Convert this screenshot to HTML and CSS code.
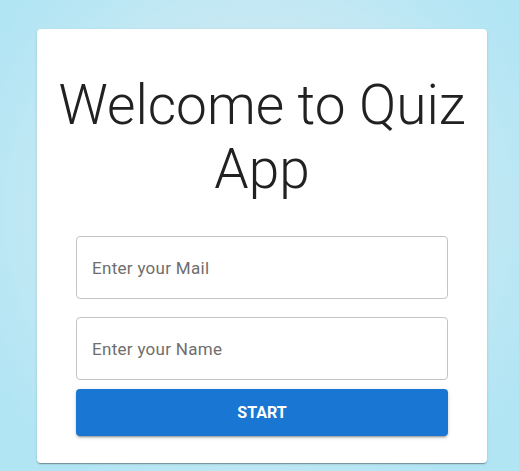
FILE: index.html
```html
<!DOCTYPE html>
<html lang="en">
<head>
<meta charset="utf-8">
<title>Quiz App</title>
<link rel="stylesheet" href="styles.css">
</head>
<body>
<main class="page">
  <section class="card">
    <h1 class="title">Welcome to Quiz App</h1>
    <form class="form">
      <input class="field field-mail" type="email" placeholder="Enter your Mail">
      <input class="field field-name" type="text" placeholder="Enter your Name">
      <button class="start" type="button">Start</button>
    </form>
  </section>
</main>
</body>
</html>
```
FILE: styles.css
```css
html, body {
  margin: 0;
  height: 100%;
}
body {
  background: radial-gradient(ellipse at 50% 45%, #d8eef4 0%, #cdeaf3 40%, #b2e5f4 85%);
  font-family: "Roboto", "Noto Sans", sans-serif;
}
.page {
  display: flex;
  justify-content: center;
  padding: 29px 0 0 5px;
}
.card {
  width: 450px;
  box-sizing: border-box;
  background: #fff;
  border-radius: 4px;
  box-shadow: 0 2px 1px -1px rgba(0,0,0,0.2), 0 1px 1px 0 rgba(0,0,0,0.14), 0 1px 3px 0 rgba(0,0,0,0.12);
  padding: 44px 20px 27px;
}
.title {
  margin: 0 0 35px;
  text-align: center;
  font-weight: 300;
  font-size: 55px;
  line-height: 64px;
  color: #212121;
}
.form {
  display: flex;
  flex-direction: column;
  padding: 0 19px;
}
.field {
  height: 63px;
  box-sizing: border-box;
  border: 1px solid #c4c4c4;
  border-radius: 4px;
  padding: 0 15px;
  font-family: "Roboto", "Noto Sans", sans-serif;
  font-size: 17px;
  letter-spacing: 0.3px;
  color: #212121;
  outline: none;
}
.field::placeholder {
  color: #6e6e6e;
}
.field-mail {
  margin-bottom: 18px;
}
.field-name {
  margin-bottom: 9px;
}
.start {
  height: 47px;
  border: none;
  border-radius: 4px;
  background: #1976d2;
  color: #fff;
  font-family: "Roboto", "Noto Sans", sans-serif;
  font-weight: 700;
  font-size: 16px;
  text-transform: uppercase;
  box-shadow: 0 3px 1px -2px rgba(0,0,0,0.2), 0 2px 2px 0 rgba(0,0,0,0.14), 0 1px 5px 0 rgba(0,0,0,0.12);
  cursor: pointer;
}
```
